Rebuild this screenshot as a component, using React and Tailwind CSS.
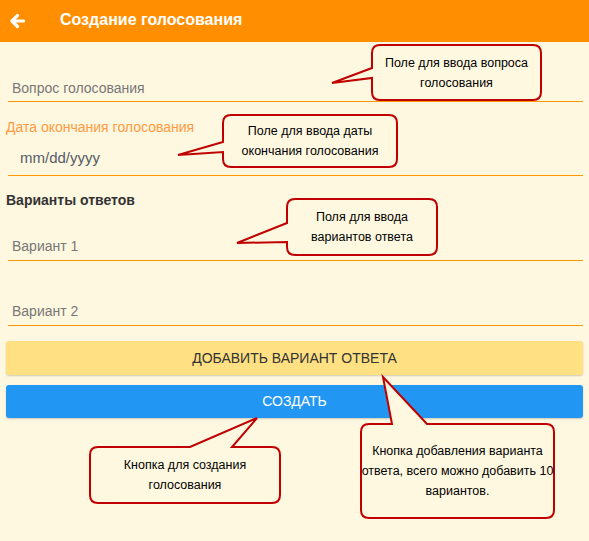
import React from 'react';

const callouts = [
    {
        d: 'M380 45 H533 Q541 45 541 53 V92 Q541 100 533 100 H380 Q372 100 372 92 V78 L332 83 L372 68 V53 Q372 45 380 45 Z',
        box: 'left-[372px] top-[45px] w-[169px] h-[55px]',
        lines: ['Поле для ввода вопроса', 'голосования'],
    },
    {
        d: 'M231 115 H389 Q397 115 397 123 V159 Q397 167 389 167 H231 Q223 167 223 159 V152 L178 155 L223 142 V123 Q223 115 231 115 Z',
        box: 'left-[223px] top-[115px] w-[174px] h-[52px]',
        lines: ['Поле для ввода даты', 'окончания голосования'],
    },
    {
        d: 'M295 199 H429 Q437 199 437 207 V247 Q437 255 429 255 H295 Q287 255 287 247 V242 L237 243 L287 223 V207 Q287 199 295 199 Z',
        box: 'left-[287px] top-[199px] w-[150px] h-[56px]',
        lines: ['Поля для ввода', 'вариантов ответа'],
    },
    {
        d: 'M98 447 H190 L257 418 L232 447 H272 Q280 447 280 455 V495 Q280 503 272 503 H98 Q90 503 90 495 V455 Q90 447 98 447 Z',
        box: 'left-[90px] top-[447px] w-[190px] h-[56px]',
        lines: ['Кнопка для создания', 'голосования'],
    },
    {
        d: 'M369 424 H392 L383 377 L427 424 H546 Q554 424 554 432 V510 Q554 518 546 518 H369 Q361 518 361 510 V432 Q361 424 369 424 Z',
        box: 'left-[361px] top-[424px] w-[193px] h-[94px]',
        lines: ['Кнопка добавления варианта', 'ответа, всего можно добавить 10', 'вариантов.'],
    },
];

function Field({ placeholder, className, textClass }) {
    return (
        <div className={`ml-2 mr-[6px] border-b border-[#ff9800] ${className}`}>
            <div className={`leading-5 ${textClass}`}>{placeholder}</div>
        </div>
    );
}

export default function App() {
    return (
        <div className="relative w-[589px] h-[541px] bg-[#fff8e1] overflow-hidden font-['Liberation_Sans',Arial,sans-serif]">
            {/* Header */}
            <div className="h-[42px] bg-[#ff8f00] flex items-center">
                <svg width="16" height="16" viewBox="0 0 16 16" className="ml-[9px] mb-[1px]">
                    <path d="M14.5 8H3 M8.5 2.5 L3 8 L8.5 13.5" fill="none" stroke="#fff" strokeWidth="3.2" strokeLinecap="round" strokeLinejoin="round" />
                </svg>
                <div className="ml-[35px] mb-[2px] text-white font-bold text-[16px]">Создание голосования</div>
            </div>

            {/* Form */}
            <Field placeholder="Вопрос голосования" className="mt-[19px] h-[41px] pl-1 pt-[17px]" textClass="text-[14px] text-[#777]" />

            <div className="ml-[6px] mt-[16px] leading-[18px] text-[14px] text-[#ff9a40]">Дата окончания голосования</div>
            <Field placeholder="mm/dd/yyyy" className="h-[40px] pl-3 pt-[12px]" textClass="text-[15px] text-[#555d66]" />

            <div className="ml-[6px] mt-[14px] leading-5 text-[14px] font-bold text-[#333]">Варианты ответов</div>
            <Field placeholder="Вариант 1" className="h-[51px] pl-1 pt-[26px]" textClass="text-[14px] text-[#777]" />
            <Field placeholder="Вариант 2" className="h-[65px] pl-1 pt-[40px]" textClass="text-[14px] text-[#777]" />

            <div className="mx-[6px] mt-[15px] h-[34px] rounded-[3px] bg-[#ffe082] shadow-[0_1px_2px_rgba(0,0,0,0.2)] flex items-center justify-center text-[14px] text-[#333]">
                ДОБАВИТЬ ВАРИАНТ ОТВЕТА
            </div>
            <div className="mx-[6px] mt-[10px] h-[33px] rounded-[3px] bg-[#2196f3] shadow-[0_1px_2px_rgba(0,0,0,0.2)] flex items-center justify-center text-[14px] text-white">
                СОЗДАТЬ
            </div>

            {/* Callouts */}
            <svg className="absolute left-0 top-0" width="589" height="541" viewBox="0 0 589 541">
                {callouts.map((c, i) => (
                    <path key={i} d={c.d} fill="#fff8e1" stroke="#c00000" strokeWidth="2" strokeLinejoin="miter" />
                ))}
            </svg>
            {callouts.map((c, i) => (
                <div key={i} className={`absolute ${c.box} flex flex-col items-center justify-center text-center text-[12.5px] leading-5 text-black whitespace-nowrap`}>
                    {c.lines.map((l, j) => <div key={j}>{l}</div>)}
                </div>
            ))}
        </div>
    );
}
